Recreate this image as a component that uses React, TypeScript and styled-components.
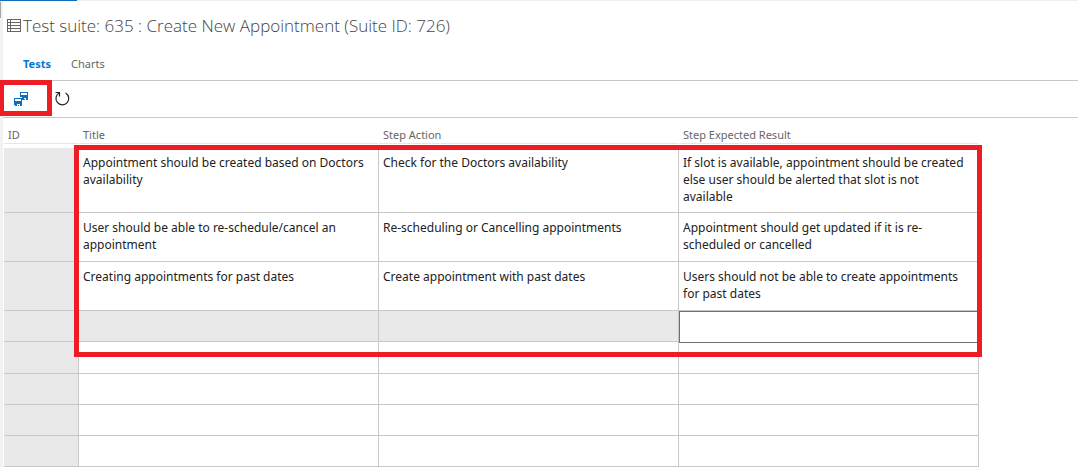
import React from "react";
import styled, { createGlobalStyle } from "styled-components";

const GlobalStyle = createGlobalStyle`
  * { box-sizing: border-box; }
  body {
    margin: 0;
    background: #fff;
    color: #222;
    font: 12px/17px "Noto Sans", "Open Sans", sans-serif;
    overflow-x: hidden;
  }
`;

const Page = styled.main`
  position: relative;
  border-left: 3px solid #f2f2f2;
  padding-left: 1px;
`;

const TopRule = styled.div`
  height: 1px;
  margin-left: -4px;
  background: linear-gradient(to right, #106ebe 77px, #f0f0f0 77px);
`;

const ScrollThumb = styled.span`
  position: absolute;
  left: -3px;
  top: 2px;
  width: 1px;
  height: 16px;
  background: #a6a6a6;
`;

const Heading = styled.header`
  display: flex;
  align-items: center;
  gap: 2px;
  height: 49px;
  padding-left: 3px;
`;

const Title = styled.h1`
  margin: 0;
  font-family: "Open Sans", "Noto Sans", sans-serif;
  font-size: 17px;
  line-height: 24px;
  font-weight: 300;
  color: #444;
  white-space: nowrap;
`;

const Tabs = styled.nav`
  display: flex;
  gap: 20px;
  height: 30px;
  padding: 5px 0 0 19px;
`;

const Tab = styled.a<{ $active?: boolean }>`
  color: ${(p) => (p.$active ? "#0078d7" : "#666")};
  font-size: 11px;
  font-weight: ${(p) => (p.$active ? 700 : 400)};
  text-decoration: none;
`;

const Toolbar = styled.div`
  display: flex;
  align-items: center;
  gap: 20px;
  height: 38px;
  border-top: 1px solid #c8c8c8;
  border-bottom: 1px solid #c8c8c8;
  margin-left: -1px;
  padding-left: 8px;
`;

const ToolButton = styled.button`
  position: relative;
  display: flex;
  align-items: center;
  justify-content: center;
  width: 20px;
  height: 24px;
  padding: 0;
  border: 0;
  background: none;
`;

const SaveHighlight = styled.span`
  position: absolute;
  left: -11px;
  top: -7px;
  width: 52px;
  height: 36px;
  border: 5px solid #ee1c24;
  border-left-width: 4px;
  pointer-events: none;
`;

const GridArea = styled.section`
  position: relative;
  padding-right: 99px;
`;

const Grid = styled.table`
  width: 100%;
  table-layout: fixed;
  border-collapse: separate;
  border-spacing: 0;
`;

const IdColumn = styled.col`
  width: 75px;
`;

const HeadCell = styled.th`
  height: 30px;
  padding: 8px 4px 0;
  text-align: left;
  vertical-align: top;
  font-size: 11px;
  font-weight: 400;
  color: #666;
  background: linear-gradient(#e6e6e6, #e6e6e6) 0 25px / calc(100% - 1px) 1px no-repeat;
`;

const Row = styled.tr<{ $height: number }>`
  height: ${(p) => p.$height}px;
`;

const Cell = styled.td<{ $shaded?: boolean; $id?: boolean; $edit?: boolean }>`
  padding: ${(p) => (p.$edit ? "0" : "6px 8px 7px 4px")};
  vertical-align: top;
  border-right: 1px solid ${(p) => (p.$edit ? "#707070" : "#c8c8c8")};
  border-bottom: ${(p) => (p.$edit ? "0" : "1px solid #c8c8c8")};
  background: ${(p) => (p.$shaded || p.$id ? "#e9e9e9" : "#fff")};
`;

const CellInput = styled.input`
  position: relative;
  display: block;
  width: 100%;
  height: 32px;
  margin-bottom: -1px;
  padding: 0 4px;
  border: 1px solid #707070;
  border-right: 0;
  border-radius: 0;
  background: #fff;
  font: inherit;
  outline: 0;
`;

const GridHighlight = styled.div`
  position: absolute;
  left: 70px;
  right: 96px;
  top: 27px;
  height: 212px;
  border: 5px solid #ee1c24;
  pointer-events: none;
`;

const SuiteIcon = () => (
  <svg width="14" height="14" viewBox="0 0 14 14" fill="none" stroke="#666" shapeRendering="crispEdges" aria-hidden="true">
    <path d="M.5.5h13v12H.5zM.5 3.5h13M.5 6.5h13M.5 9.5h13M3.5.5v12" />
  </svg>
);

const SaveAllIcon = () => (
  <svg width="14" height="14" viewBox="0 0 14 14" fill="#106ebe" fillRule="evenodd" shapeRendering="crispEdges" aria-hidden="true">
    <path d="M6 0h8v8h-2V6h-2v1h1v1H8V5H6zM7 1v2h6V1z" />
    <path d="M0 6h8v8H6v-2H3v2H1l-1-1zM1 7v2h6V7zM4 13h1v1H4z" />
  </svg>
);

const RefreshIcon = () => (
  <svg width="18" height="16" viewBox="-3 0 18 16" fill="none" stroke="#222" aria-hidden="true">
    <path d="M10.5 1.9A6.4 6.4 0 1 1 4.4 1.8" strokeWidth="1.2" />
    <path d="M.5 1.5h4v4" strokeWidth="1.2" />
  </svg>
);

const tests = [
  {
    height: 65,
    title: "Appointment should be created based on Doctors availability",
    action: "Check for the Doctors availability",
    result: "If slot is available, appointment should be created else user should be alerted that slot is not available",
  },
  {
    height: 49,
    title: "User should be able to re-schedule/cancel an appointment",
    action: "Re-scheduling or Cancelling appointments",
    result: "Appointment should get updated if it is re-scheduled or cancelled",
  },
  {
    height: 49,
    title: "Creating appointments for past dates",
    action: "Create appointment with past dates",
    result: "Users should not be able to create appointments for past dates",
  },
];

const emptyRows = [32, 31, 31, 31];

export default function App() {
  return (
    <Page>
      <GlobalStyle />
      <TopRule />
      <ScrollThumb />
      <Heading>
        <SuiteIcon />
        <Title>Test suite: 635 : Create New Appointment (Suite ID: 726)</Title>
      </Heading>
      <Tabs>
        <Tab href="#tests" $active>Tests</Tab>
        <Tab href="#charts">Charts</Tab>
      </Tabs>
      <Toolbar>
        <ToolButton type="button" aria-label="Save all">
          <SaveAllIcon />
          <SaveHighlight />
        </ToolButton>
        <ToolButton type="button" aria-label="Refresh">
          <RefreshIcon />
        </ToolButton>
      </Toolbar>
      <GridArea>
        <Grid>
          <colgroup>
            <IdColumn />
            <col />
            <col />
            <col />
          </colgroup>
          <thead>
            <tr>
              <HeadCell scope="col">ID</HeadCell>
              <HeadCell scope="col">Title</HeadCell>
              <HeadCell scope="col">Step Action</HeadCell>
              <HeadCell scope="col">Step Expected Result</HeadCell>
            </tr>
          </thead>
          <tbody>
            {tests.map((t) => (
              <Row key={t.title} $height={t.height}>
                <Cell $id />
                <Cell>{t.title}</Cell>
                <Cell>{t.action}</Cell>
                <Cell>{t.result}</Cell>
              </Row>
            ))}
            <Row $height={31}>
              <Cell $id />
              <Cell $shaded />
              <Cell $shaded />
              <Cell $edit>
                <CellInput type="text" aria-label="Step Expected Result" />
              </Cell>
            </Row>
            {emptyRows.map((height, i) => (
              <Row key={i} $height={height}>
                <Cell $id />
                <Cell />
                <Cell />
                <Cell />
              </Row>
            ))}
          </tbody>
        </Grid>
        <GridHighlight />
      </GridArea>
    </Page>
  );
}
